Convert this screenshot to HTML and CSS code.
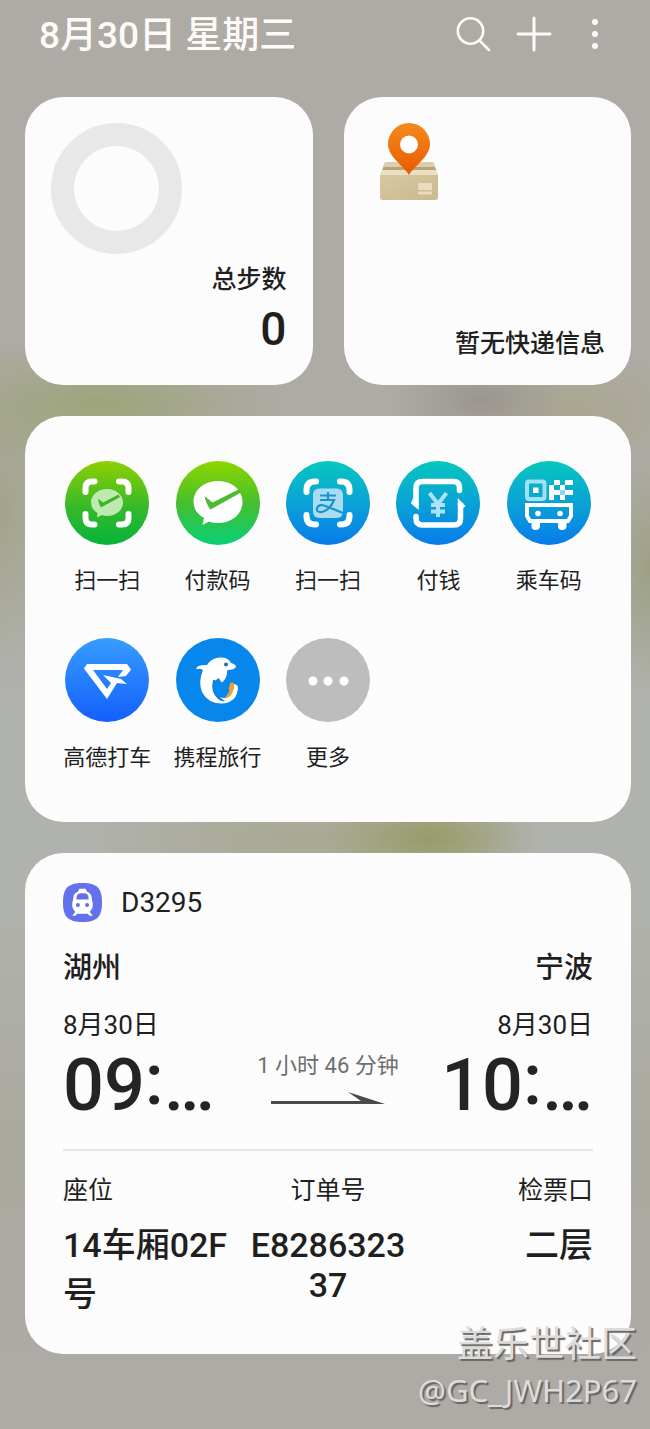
FILE: index.html
```html
<!DOCTYPE html>
<html lang="zh-CN">
<head>
<meta charset="utf-8">
<meta name="viewport" content="width=device-width, initial-scale=1">
<title>8月30日 星期三</title>
<link rel="stylesheet" href="styles.css">
</head>
<body>
<header class="topbar">
  <h1 class="topbar-title">8月30日 星期三</h1>
  <div class="topbar-actions">
    <button class="icon-button" type="button" aria-label="搜索">
      <svg viewBox="0 0 40 40" fill="none" stroke="#fdfaf7" stroke-width="2.6" stroke-linecap="round"><circle cx="17.5" cy="17" r="12.7"/><path d="M26.500 26.500L36 36"/></svg>
    </button>
    <button class="icon-button" type="button" aria-label="添加">
      <svg viewBox="0 0 40 40" fill="none" stroke="#fdfaf7" stroke-width="3" stroke-linecap="round"><path d="M20 4V36M4 20H36"/></svg>
    </button>
    <button class="icon-button" type="button" aria-label="更多选项">
      <svg viewBox="0 0 40 40" fill="#fdfaf7"><circle cx="20" cy="8" r="3"/><circle cx="20" cy="20" r="3"/><circle cx="20" cy="32" r="3"/></svg>
    </button>
  </div>
</header>

<main class="board">
  <section class="card widget steps">
    <div class="ring"></div>
    <div class="steps-text">
      <h2 class="widget-label">总步数</h2>
      <p class="steps-count">0</p>
    </div>
  </section>

  <section class="card widget parcel">
    <svg class="parcel-icon" viewBox="0 0 58 78">
      <defs>
        <linearGradient id="pin" x1="0" y1="0" x2="0" y2="1"><stop offset="0" stop-color="#f58a1e"/><stop offset="1" stop-color="#e85a00"/></linearGradient>
        <linearGradient id="box" x1="0" y1="0" x2="1" y2="1"><stop offset="0" stop-color="#d8c7a0"/><stop offset="1" stop-color="#cbb98f"/></linearGradient>
      </defs>
      <path d="M6 39H52Q54 39 54.500 41L58 53H0L4 41Q4.500 39 6 39Z" fill="#dccdab"/>
      <path d="M3.500 44H55L56 47H2.500Z" fill="#b5a37b"/>
      <path d="M2.500 47H56L58 53H0Z" fill="#eadfc2"/>
      <path d="M0 52H58V74Q58 77 55 77H3Q0 77 0 74Z" fill="url(#box)"/>
      <rect x="38" y="60" width="14" height="7" rx="1" fill="#e9dcc0"/><rect x="38" y="68.500" width="14" height="3" rx="1" fill="#e9dcc0"/>
      <path d="M29 52C24 43 8 34 8 21A21 21 0 0 1 50 21C50 34 34 43 29 52Z" fill="url(#pin)"/>
      <circle cx="29" cy="21.500" r="9" fill="#fff"/>
    </svg>
    <h2 class="widget-label">暂无快递信息</h2>
  </section>

  <section class="card apps" aria-label="快捷应用">
    <button class="app" type="button">
      <svg class="app-icon" viewBox="0 0 84 84">
        <defs><linearGradient id="g1" x1="0" y1="0" x2="0" y2="1"><stop offset="0" stop-color="#8ed000"/><stop offset=".55" stop-color="#35b92a"/><stop offset="1" stop-color="#06b43c"/></linearGradient></defs>
        <circle cx="42" cy="42" r="42" fill="url(#g1)"/>
        <path d="M20.500 31V27Q20.500 20.500 27 20.500H29.500M54 20.500H57Q63.500 20.500 63.500 27V31M63.500 53V57Q63.500 63.500 57 63.500H54M29.500 63.500H27Q20.500 63.500 20.500 57V53" fill="none" stroke="#fff" stroke-width="6" stroke-linecap="round"/>
        <path d="M42 28C51 28 58 34 58 41.500S51 55 42 55Q39 55 37 54L32 56.500L32.500 52Q26 48 26 41.500C26 34 33 28 42 28Z" fill="#bfeaaf"/>
        <path d="M33 37.500L38 41.500L53.500 33.500L55 36L36 46.500Q34 44 33 37.500Z" fill="#3eb42a"/>
      </svg>
      <span class="app-name">扫一扫</span>
    </button>
    <button class="app" type="button">
      <svg class="app-icon" viewBox="0 0 84 84">
        <defs><linearGradient id="g2" x1="0" y1="0" x2="0" y2="1"><stop offset="0" stop-color="#8ed600"/><stop offset=".5" stop-color="#45bf2d"/><stop offset="1" stop-color="#08cf78"/></linearGradient></defs>
        <circle cx="42" cy="42" r="42" fill="url(#g2)"/>
        <path d="M42 20C56 20 66.500 29 66.500 41S56 62 42 62Q37 62 33 60.500L26.500 64L28 57Q17.500 51 17.500 41C17.500 29 28 20 42 20Z" fill="#fff"/>
        <path d="M28.500 35L36.500 41.500L62.500 28.500L65 31.500L34.500 48.500Q30 43 28.500 35Z" fill="#4fb92f"/>
      </svg>
      <span class="app-name">付款码</span>
    </button>
    <button class="app" type="button">
      <svg class="app-icon" viewBox="0 0 84 84">
        <defs><linearGradient id="g3" x1="0" y1="0" x2="0" y2="1"><stop offset="0" stop-color="#07c7be"/><stop offset=".55" stop-color="#099fd8"/><stop offset="1" stop-color="#087bea"/></linearGradient></defs>
        <circle cx="42" cy="42" r="42" fill="url(#g3)"/>
        <path d="M20.500 31V29Q20.500 20.500 29 20.500H30M54 20.500H55Q63.500 20.500 63.500 29V31M63.500 54V55Q63.500 63.500 55 63.500H54M30 63.500H29Q20.500 63.500 20.500 55V54" fill="none" stroke="#fff" stroke-width="6" stroke-linecap="round"/>
        <rect x="27" y="27.500" width="30" height="29.500" rx="6" fill="#a9dcf3"/>
        <path d="M34 34.500H50M42 31V39M34 39H48Q44 49 36 51Q30 51.500 31 47Q33 42 41 45.500L57 52" fill="none" stroke="#1594cf" stroke-width="2.200"/>
      </svg>
      <span class="app-name">扫一扫</span>
    </button>
    <button class="app" type="button">
      <svg class="app-icon" viewBox="0 0 84 84">
        <circle cx="42" cy="42" r="42" fill="url(#g3)"/>
        <g fill="none" stroke="#fff" stroke-width="5.500">
          <path d="M20 44V27Q20 20.500 26.500 20.500H57.500Q63.500 20.500 63.500 27V29"/>
          <path d="M20 56V57.500Q20 64 26.500 64H58Q64.500 64 64.500 57.500V42"/>
        </g>
        <g fill="#fff"><circle cx="63.500" cy="29.500" r="2.750"/><circle cx="20" cy="55.500" r="2.750"/></g>
        <path d="M17.250 36L15 42.500L22.750 49V42H17.250ZM61.750 44V37L69.500 45L67.250 47Z" fill="#fff"/>
        <path d="M33.500 32L42 43L50.500 32M35 44H49M35 50.500H49M42 43V56" fill="none" stroke="#b0e2f7" stroke-width="4"/>
      </svg>
      <span class="app-name">付钱</span>
    </button>
    <button class="app" type="button">
      <svg class="app-icon" viewBox="0 0 84 84">
        <circle cx="42" cy="42" r="42" fill="url(#g3)"/>
        <rect x="20" y="20.500" width="17.500" height="17.500" rx="2" fill="none" stroke="#a4e0f4" stroke-width="4"/>
        <rect x="26" y="26.500" width="5.500" height="5.500" fill="#fff"/>
        <path d="M47 19H53V24H47ZM58 19H66V24H58ZM42 24H47V39H42ZM53 24H58V29H53ZM47 29H53V34H47ZM58 29H66V34H58ZM53 34H58V39H53Z" fill="#fff"/>
        <path d="M53 29H58V34H53Z" fill="#8cd6ee"/>
        <path d="M20 44H64V55L61 60H23L20 55Z" fill="none" stroke="#fff" stroke-width="4"/>
        <circle cx="31" cy="52.500" r="2.800" fill="#fff"/><circle cx="53" cy="52.500" r="2.800" fill="#fff"/>
        <path d="M24.500 61H33V65Q33 69 28.700 69T24.500 65ZM51 61H59.500V65Q59.500 69 55.200 69T51 65Z" fill="#fff"/>
      </svg>
      <span class="app-name">乘车码</span>
    </button>
    <button class="app" type="button">
      <svg class="app-icon" viewBox="0 0 84 84">
        <defs><linearGradient id="g6" x1="0" y1="0" x2="0" y2="1"><stop offset="0" stop-color="#389cff"/><stop offset="1" stop-color="#1360fb"/></linearGradient></defs>
        <circle cx="42" cy="42" r="42" fill="url(#g6)"/>
        <path d="M22 26H62L66 31.500L61 38L53 39L58 32H28L42 51L46 45L38 37L56 41L62 46L52 45L42 61L19 30.500Z" fill="#fff"/>
      </svg>
      <span class="app-name">高德打车</span>
    </button>
    <button class="app" type="button">
      <svg class="app-icon" viewBox="0 0 84 84">
        <circle cx="42" cy="42" r="42" fill="#0787ec"/>
        <path d="M20 31Q21 26.500 31 27Q36 19.500 44 19.500Q52 19 55 25Q60 26.500 60 29Q58 32 51.500 32Q51 34 51 36Q50 41 46 44.500Q44 43 43 40Q37 43 37 48Q37 60 49 60Q57 57 57 46Q62 46 62 50Q61 64 47 65.500Q32 66 26 54Q22 44 27 32Q24 30 20 31Z" fill="#fff"/>
        <path d="M54 45Q59 43 58 50Q56 60 48 60.500Q54 55 53 50Z" fill="#eaa236"/>
        <path d="M37 42Q34 54 42 61Q46 64 49 63Q38 57 39.500 42Z" fill="#0787ec"/>
        <circle cx="50" cy="26.500" r="2" fill="#1d6fae"/>
      </svg>
      <span class="app-name">携程旅行</span>
    </button>
    <button class="app" type="button">
      <svg class="app-icon" viewBox="0 0 84 84"><circle cx="42" cy="42" r="42" fill="#bdbdbd"/><g fill="#fff"><circle cx="27" cy="43" r="4.500"/><circle cx="42" cy="43" r="4.500"/><circle cx="58" cy="43" r="4.500"/></g></svg>
      <span class="app-name">更多</span>
    </button>
  </section>

  <section class="card trip">
    <div class="trip-head">
      <svg class="train-icon" viewBox="0 0 38 38">
        <path d="M19 0C33 0 38 5 38 19S33 38 19 38S0 33 0 19S5 0 19 0Z" fill="#6371ec"/>
        <path d="M16 5.500H22L23.500 8.500Q28 10 28 15L29 20Q29.500 25 26 28L29 32H26L24 30H14L12 32H9L12 28Q8.500 25 9 20L10 15Q10 10 14.500 8.500Z" fill="#fff"/>
        <path d="M13 16Q13 10 17 10H21Q25 10 25 16Z" fill="#6371ec"/><circle cx="14.500" cy="21.500" r="2" fill="#6371ec"/><circle cx="23.500" cy="21.500" r="2" fill="#6371ec"/>
      </svg>
      <span class="train-no">D3295</span>
    </div>
    <div class="row cities"><span>湖州</span><span>宁波</span></div>
    <div class="row dates"><span>8月30日</span><span>8月30日</span></div>
    <div class="row times">
      <span class="time">09<span class="colon">:</span>…</span>
      <div class="duration">
        <span>1 小时 46 分钟</span>
        <svg class="arrow" viewBox="0 0 114 14"><path d="M0 10H90L77 1L114 13H0Z" fill="#4a4a4a"/></svg>
      </div>
      <span class="time">10<span class="colon">:</span>…</span>
    </div>
    <dl class="details">
      <div class="detail"><dt>座位</dt><dd>14车厢02F号</dd></div>
      <div class="detail detail-center"><dt>订单号</dt><dd>E828632337</dd></div>
      <div class="detail detail-end"><dt>检票口</dt><dd>二层</dd></div>
    </dl>
  </section>
</main>
<div class="watermark"><span class="watermark-site">盖乐世社区</span><span class="watermark-user">@GC_JWH2P67</span></div>
</body>
</html>
```
FILE: styles.css
```css
* { box-sizing: border-box; }

body {
  position: relative;
  min-height: 100vh;
  margin: 0;
  padding: 0 19px 76px 25px;
  color: #1f1f1f;
  font-family: Roboto, "Noto Sans CJK SC", sans-serif;
  background:
    radial-gradient(ellipse 110px 50px at 430px 838px, #989b68, transparent),
    radial-gradient(ellipse 220px 60px at 300px 838px, #a9a892, transparent),
    radial-gradient(ellipse 180px 70px at 100px 405px, #9ca579, transparent),
    radial-gradient(ellipse 90px 50px at 480px 400px, #9a968f, transparent),
    radial-gradient(ellipse 120px 60px at 580px 410px, #a9a790, transparent),
    radial-gradient(ellipse 60px 120px at 100% 570px, #9da084, transparent),
    radial-gradient(ellipse 60px 160px at 0 510px, #a3a48b, transparent),
    linear-gradient(#aeaaa5 0, #aeaaa5 420px, #b0b2ad 720px, #b0b2ad 900px, #aaa99f 1150px, #aeaaa5 1360px);
}

h1, h2, p, dl, dd { margin: 0; }

button {
  padding: 0;
  border: 0;
  background: none;
  color: inherit;
  font: inherit;
  cursor: pointer;
}

svg { display: block; }

.topbar {
  display: flex;
  align-items: center;
  justify-content: space-between;
  height: 68px;
  padding: 0 16px 0 14px;
}

.topbar-title {
  padding-top: 4px;
  color: #fdfaf7;
  font-size: 37px;
  font-weight: 500;
  line-height: 64px;
}

.topbar-actions { display: flex; gap: 21px; }

.icon-button { width: 40px; height: 40px; }

.board {
  display: grid;
  grid-template-columns: 1fr 1fr;
  gap: 31px;
  padding-top: 29px;
}

.card { border-radius: 38px; background: #fcfcfc; }

.widget {
  display: flex;
  flex-direction: column;
  justify-content: space-between;
  min-height: 288px;
  padding: 26px 26px 24px;
}

.ring {
  width: 131px;
  height: 131px;
  border: 23px solid #e8e8e8;
  border-radius: 50%;
}

.widget-label {
  font-size: 25px;
  font-weight: 500;
  line-height: 34px;
  text-align: right;
}

.steps-count {
  font-size: 46px;
  font-weight: 500;
  line-height: 64px;
  text-align: right;
}

.parcel-icon { width: 58px; height: 78px; margin-left: 10px; }

.apps {
  grid-column: 1 / -1;
  display: grid;
  grid-template-columns: repeat(5, 1fr);
  row-gap: 41px;
  padding: 45px 27px 48px;
}

.app {
  display: flex;
  flex-direction: column;
  align-items: center;
  gap: 20px;
}

.app-icon { width: 84px; height: 84px; }

.app-name {
  font-size: 22px;
  line-height: 32px;
  white-space: nowrap;
}

.trip {
  grid-column: 1 / -1;
  padding: 30px 38px 38px;
}

.trip-head { display: flex; align-items: center; gap: 19px; }

.train-icon { width: 39px; height: 39px; }

.train-no { font-size: 28px; line-height: 39px; }

.row { display: flex; justify-content: space-between; }

.cities {
  margin-top: 26px;
  font-size: 29px;
  font-weight: 500;
  line-height: 40px;
}

.dates {
  margin-top: 18px;
  font-size: 26px;
  line-height: 38px;
}

.time {
  color: #242424;
  font-size: 72px;
  font-weight: 500;
  line-height: 80px;
}

.colon { vertical-align: 6px; line-height: 1; }

.duration {
  display: flex;
  flex-direction: column;
  align-items: center;
  gap: 9px;
  padding-top: 6px;
  color: #6e6e6e;
  font-size: 22px;
  line-height: 32px;
}

.arrow { width: 114px; height: 14px; }

.details {
  display: grid;
  grid-template-columns: repeat(3, 1fr);
  grid-template-rows: auto auto;
  column-gap: 12px;
  row-gap: 8px;
  margin-top: 23px;
  padding-top: 21px;
  border-top: 2px solid #e4e4e4;
}

.detail {
  display: grid;
  grid-row: span 2;
  grid-template-rows: subgrid;
  align-items: baseline;
}

.detail-center { text-align: center; }

.detail-end { text-align: right; }

.detail dt { font-size: 25px; line-height: 38px; }

.detail dd {
  font-size: 34px;
  font-weight: 500;
  word-break: break-all;
}

.watermark {
  position: absolute;
  right: 13px;
  bottom: 18px;
  display: flex;
  flex-direction: column;
  align-items: flex-end;
  color: #dcdcdc;
  font-family: "Noto Sans", "Noto Sans CJK SC", sans-serif;
  text-shadow: 2px 2px 1px #666;
  pointer-events: none;
}

.watermark-site { font-size: 36px; line-height: 48px; }

.watermark-user { font-size: 31px; line-height: 44px; }
```
